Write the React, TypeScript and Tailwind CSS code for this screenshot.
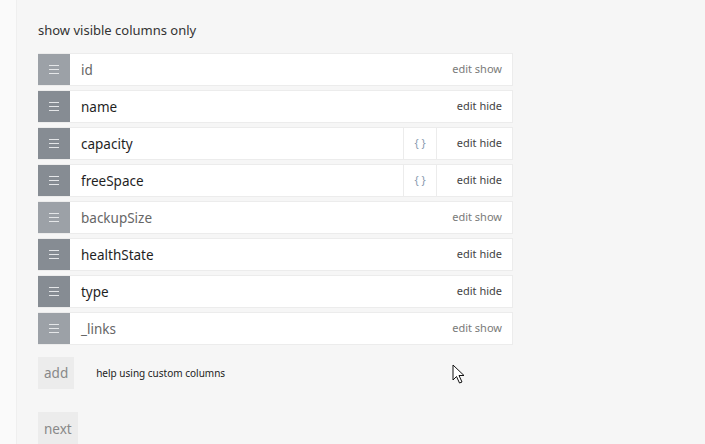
interface Column { name: string; visible: boolean; custom?: boolean; }

const COLUMNS: Column[] = [
  { name: 'id', visible: false },
  { name: 'name', visible: true },
  { name: 'capacity', visible: true, custom: true },
  { name: 'freeSpace', visible: true, custom: true },
  { name: 'backupSize', visible: false },
  { name: 'healthState', visible: true },
  { name: 'type', visible: true },
  { name: '_links', visible: false },
];

function Handle({ visible }: { visible: boolean }) {
  return (
    <div className={`w-[32px] shrink-0 flex flex-col items-center justify-center gap-[2.5px] ${visible ? 'bg-[#868c93]' : 'bg-[#9ca1a7]'}`}>
      <span className="block w-[10px] h-[1.5px] bg-[#e4e6e8]" />
      <span className="block w-[10px] h-[1.5px] bg-[#e4e6e8]" />
      <span className="block w-[10px] h-[1.5px] bg-[#e4e6e8]" />
    </div>
  );
}

export default function App() {
  return (
    <div className="w-[705px] h-[444px] overflow-hidden flex bg-[#fafafa]" style={{ fontFamily: '"Noto Sans", "Open Sans", sans-serif' }}>
      <div className="w-[17px] shrink-0 border-r border-[#efefef]" />
      <div className="flex-1 bg-[#f6f6f6] pl-[21px] pt-[20px] relative">
        <p className="text-[13px] text-[#333] leading-[20px] mb-[13px]">show visible columns only</p>

        <div className="flex flex-col gap-[4px] w-[475px]">
          {COLUMNS.map(c => (
            <div key={c.name} className="flex h-[33px] bg-white border border-[#ececec] border-l-0">
              <Handle visible={c.visible} />
              <div className={`flex-1 flex items-center pl-[11px] pt-[1px] text-[13.5px] ${c.visible ? 'text-[#1f1f1f]' : 'text-[#666]'}`}>
                {c.name}
              </div>
              {c.custom && (
                <div className="w-[34px] flex items-center justify-center border-l border-r border-[#ececec] text-[11px] text-[#8a9ab0]">
                  {'{ }'}
                </div>
              )}
              <div className={`flex items-center justify-end pr-[10px] text-[11px] ${c.custom ? 'w-[75px]' : 'w-[90px]'} ${c.visible ? 'text-[#444]' : 'text-[#7a7a7a]'}`}>
                edit {c.visible ? 'hide' : 'show'}
              </div>
            </div>
          ))}
        </div>

        <div className="flex items-center mt-[12px]">
          <button className="h-[32px] px-[6px] bg-[#ececec] text-[13.5px] text-[#888]">add</button>
          <span className="ml-[22px] text-[10px] text-[#222]">help using custom columns</span>
        </div>

        <button className="mt-[23px] h-[34px] px-[6px] bg-[#ececec] text-[13.5px] text-[#888]">next</button>

        <div className="absolute left-[435px] top-[364px]">
          <svg width="14" height="22" viewBox="0 0 14 22">
            <path d="M1 1 L1 16 L4.5 12.5 L7.5 19 L10 18 L7 11.5 L12 11.5 Z" fill="white" stroke="#111" strokeWidth="1" strokeLinejoin="miter" />
          </svg>
        </div>
      </div>
    </div>
  );
}
